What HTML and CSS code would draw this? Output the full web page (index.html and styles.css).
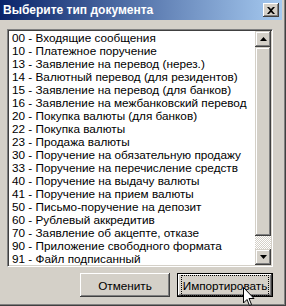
FILE: index.html
```
<!DOCTYPE html>
<html lang="ru">
<head>
    <meta charset="UTF-8">
    <title>Выберите тип документа</title>
    <link rel="stylesheet" href="styles.css">
</head>
<body>

<div class="window">
    <div class="frame">
        <!-- Title bar -->
        <div class="titlebar">
            <span class="title">Выберите тип документа</span>
            <button class="close-btn" aria-label="Закрыть">
                <svg width="8" height="7" viewBox="0 0 8 7"><path d="M0 0h2l2 2 2-2h2L5 3.5 8 7H6L4 5 2 7H0l3-3.5z" fill="#000"/></svg>
            </button>
        </div>

        <div class="dialog-body">
            <!-- Document type list -->
            <div class="listbox">
                <ul class="items">
                    <li>00 - Входящие сообщения</li>
                    <li>10 - Платежное поручение</li>
                    <li>13 - Заявление на перевод (нерез.)</li>
                    <li>14 - Валютный перевод (для резидентов)</li>
                    <li>15 - Заявление на перевод (для банков)</li>
                    <li>16 - Заявление на межбанковский перевод</li>
                    <li>20 - Покупка валюты (для банков)</li>
                    <li>22 - Покупка валюты</li>
                    <li>23 - Продажа валюты</li>
                    <li>30 - Поручение на обязательную продажу</li>
                    <li>33 - Поручение на перечисление средств</li>
                    <li>40 - Поручение на выдачу валюты</li>
                    <li>41 - Поручение на прием валюты</li>
                    <li>50 - Письмо-поручение на депозит</li>
                    <li>60 - Рублевый аккредитив</li>
                    <li>70 - Заявление об акцепте, отказе</li>
                    <li>90 - Приложение свободного формата</li>
                    <li>91 - Файл подписанный</li>
                </ul>
                <div class="scrollbar">
                    <div class="scroll-btn">
                        <svg width="7" height="4" viewBox="0 0 7 4"><path d="M3.5 0L7 4H0z" fill="#000"/></svg>
                    </div>
                    <div class="thumb"></div>
                    <div class="track"></div>
                    <div class="scroll-btn">
                        <svg width="7" height="4" viewBox="0 0 7 4"><path d="M0 0h7L3.5 4z" fill="#000"/></svg>
                    </div>
                </div>
            </div>

            <div class="actions">
                <button class="btn btn-cancel">Отменить</button>
                <button class="btn btn-default"><span class="focus">Импортировать</span></button>
            </div>
        </div>
    </div>

    <!-- Mouse pointer over the default button -->
    <svg class="cursor" width="12" height="19" viewBox="0 0 12 19">
        <path d="M0.5 0.5v15.5l3.5-3.5 2.5 6 2-1-2.5-6h5z" fill="#fff" stroke="#000" stroke-width="1"/>
    </svg>
</div>

</body>
</html>
```

FILE: styles.css
```
/* Window frame */
body {
    margin: 0;
    font-family: "Liberation Sans", Arial, sans-serif;
    font-size: 11.75px;
    color: #000;
}

.window {
    position: relative;
    width: 286px;
    height: 306px;
    box-sizing: border-box;
    padding: 0 4px 4px 0;
    background-color: #d4d0c8;
    box-shadow: inset -1px -1px #404040, inset -2px -2px #808080;
    overflow: hidden;
}

.frame {
    display: flex;
    flex-direction: column;
    height: 100%;
}

/* Title bar */
.titlebar {
    display: flex;
    align-items: center;
    justify-content: space-between;
    height: 20px;
    padding: 0 3px;
    background: linear-gradient(to right, #0a246a, #a6caf0);
}

.title {
    color: #fff;
    font-weight: bold;
    font-size: 12px;
}

.close-btn {
    display: flex;
    align-items: center;
    justify-content: center;
    width: 16px;
    height: 14px;
    padding: 0;
    background-color: #d4d0c8;
    border: none;
    box-shadow: inset -1px -1px #404040, inset 1px 1px #fff, inset -2px -2px #808080;
}

/* Dialog contents */
.dialog-body {
    padding: 9px 9px 0 7px;
}

.listbox {
    display: flex;
    height: 238px;
    box-sizing: border-box;
    background-color: #fff;
    border: 1px solid;
    border-color: #808080 #fff #fff #808080;
    box-shadow: inset 1px 1px #404040, inset -1px -1px #d4d0c8;
    padding: 1px;
}

.items {
    flex: 1;
    margin: 0;
    padding: 0;
    list-style: none;
}

.items li {
    height: 13px;
    line-height: 13px;
    padding-left: 3px;
    white-space: nowrap;
}

/* Scrollbar */
.scrollbar {
    display: flex;
    flex-direction: column;
    width: 16px;
}

.scroll-btn {
    display: flex;
    align-items: center;
    justify-content: center;
    height: 16px;
    background-color: #d4d0c8;
    box-shadow: inset -1px -1px #404040, inset 1px 1px #d4d0c8, inset -2px -2px #808080, inset 2px 2px #fff;
}

.thumb {
    height: 189px;
    background-color: #d4d0c8;
    box-shadow: inset -1px -1px #404040, inset 1px 1px #d4d0c8, inset -2px -2px #808080, inset 2px 2px #fff;
}

.track {
    flex: 1;
    background: repeating-conic-gradient(#fff 0 25%, #d4d0c8 0 50%) 0 0 / 2px 2px;
}

/* Buttons */
.actions {
    display: flex;
    justify-content: flex-end;
    gap: 7px;
    margin-top: 6px;
}

.btn {
    height: 24px;
    padding: 0;
    font-family: "Liberation Sans", Arial, sans-serif;
    font-size: 11.75px;
    color: #000;
    background-color: #d4d0c8;
    border: none;
    box-shadow: inset -1px -1px #404040, inset 1px 1px #fff, inset -2px -2px #808080;
}

.btn-cancel {
    width: 90px;
}

.btn-default {
    width: 96px;
    border: 1px solid #000;
}

.focus {
    display: block;
    margin: 0 3px;
    padding: 3px 0;
    border: 1px dotted #000;
}

/* Pointer overlay */
.cursor {
    position: absolute;
    left: 243px;
    top: 287px;
}
```
